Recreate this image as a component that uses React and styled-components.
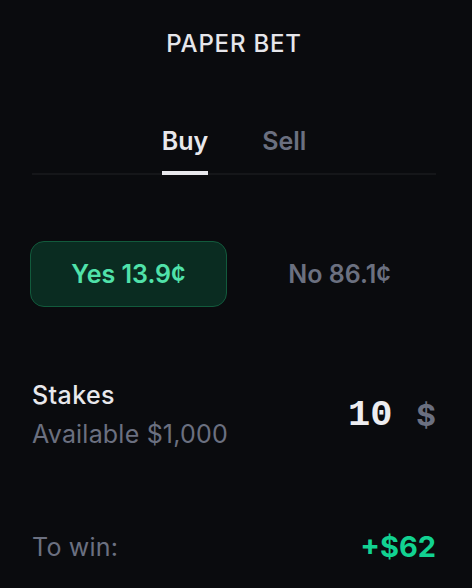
import styled, { createGlobalStyle } from "styled-components"

const GlobalStyle = createGlobalStyle`
  html, body {
    margin: 0;
    background: #0a0b0e;
  }
  body {
    font-family: Inter, "Noto Sans", sans-serif;
    color: #e8e8ec;
  }
`

const Panel = styled.div`
  width: 472px;
  height: 588px;
  box-sizing: border-box;
  padding: 30px 36px 0 32px;
  display: flex;
  flex-direction: column;
`

const Title = styled.h2`
  margin: 0;
  text-align: center;
  font-size: 24px;
  font-weight: 500;
  letter-spacing: 0.8px;
  line-height: 28px;
  color: #e6e6ea;
`

const Tabs = styled.div`
  margin-top: 68px;
  display: flex;
  justify-content: center;
  gap: 54px;
  border-bottom: 2px solid #151619;
`

const Tab = styled.button`
  background: transparent;
  border: none;
  padding: 0 0 15px;
  font-family: inherit;
  font-size: 25px;
  font-weight: 600;
  line-height: 30px;
  color: ${(p) => (p.$active ? "#e8e8ec" : "#6b7080")};
  border-bottom: 4px solid ${(p) => (p.$active ? "#e8e8ec" : "transparent")};
  margin-bottom: -2px;
`

const Outcomes = styled.div`
  margin-top: 66px;
  display: grid;
  grid-template-columns: 1fr 1fr;
  gap: 14px;
  margin-left: -2px;
  margin-right: -2px;
`

const Outcome = styled.button`
  height: 66px;
  border-radius: 14px;
  font-family: inherit;
  font-size: 25px;
  font-weight: 600;
  border: 1px solid ${(p) => (p.$selected ? "#125a3c" : "transparent")};
  background: ${(p) => (p.$selected ? "#0a2c21" : "transparent")};
  color: ${(p) => (p.$selected ? "#50e2aa" : "#6b7080")};
`

const StakeRow = styled.div`
  margin-top: 73px;
  display: flex;
  justify-content: space-between;
  align-items: center;
`

const StakeInfo = styled.div`
  display: flex;
  flex-direction: column;
  gap: 9px;
`

const Label = styled.div`
  font-size: 25px;
  font-weight: 500;
  letter-spacing: 0.4px;
  line-height: 30px;
  color: #e8e8ec;
`

const Sub = styled.div`
  font-size: 25px;
  letter-spacing: 0.2px;
  line-height: 30px;
  color: #6b7080;
`

const Amount = styled.div`
  display: flex;
  align-items: center;
  gap: 24px;
`

const Value = styled.span`
  font-family: "Liberation Mono", "DejaVu Sans Mono", monospace;
  font-size: 37px;
  font-weight: 700;
  color: #ededf0;
`

const Currency = styled.span`
  font-size: 30px;
  font-weight: 700;
  color: #6b7080;
`

const WinRow = styled.div`
  margin-top: 80px;
  display: flex;
  justify-content: space-between;
  align-items: center;
`

const WinValue = styled.div`
  font-size: 29px;
  font-weight: 700;
  color: #12d291;
`

export default function App() {
  return (
    <>
      <GlobalStyle />
      <Panel>
        <Title>PAPER BET</Title>
        <Tabs>
          <Tab $active>Buy</Tab>
          <Tab>Sell</Tab>
        </Tabs>
        <Outcomes>
          <Outcome $selected>Yes 13.9¢</Outcome>
          <Outcome>No 86.1¢</Outcome>
        </Outcomes>
        <StakeRow>
          <StakeInfo>
            <Label>Stakes</Label>
            <Sub>Available $1,000</Sub>
          </StakeInfo>
          <Amount>
            <Value>10</Value>
            <Currency>$</Currency>
          </Amount>
        </StakeRow>
        <WinRow>
          <Sub>To win:</Sub>
          <WinValue>+$62</WinValue>
        </WinRow>
      </Panel>
    </>
  )
}
